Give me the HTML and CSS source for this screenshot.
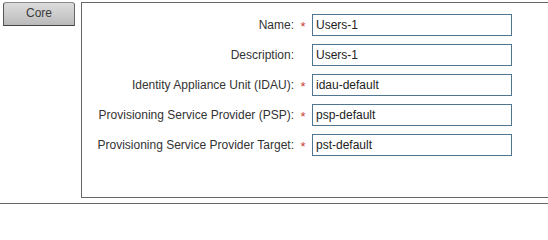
FILE: index.html
```html
<!DOCTYPE html>
<html>
<head>
<meta charset="utf-8">
<link rel="stylesheet" href="styles.css">
</head>
<body>
<div class="page">
  <div class="main">
    <div class="tabs">
      <div class="tab">Core</div>
    </div>
    <div class="panel">
      <div class="form">
        <label class="lbl">Name:</label><span class="req">*</span><input class="field" value="Users-1">
        <label class="lbl">Description:</label><span class="req"></span><input class="field" value="Users-1">
        <label class="lbl">Identity Appliance Unit (IDAU):</label><span class="req">*</span><input class="field" value="idau-default">
        <label class="lbl">Provisioning Service Provider (PSP):</label><span class="req">*</span><input class="field" value="psp-default">
        <label class="lbl">Provisioning Service Provider Target:</label><span class="req">*</span><input class="field" value="pst-default">
      </div>
    </div>
  </div>
  <div class="rule"></div>
</div>
</body>
</html>
```

FILE: styles.css
```css
html, body {
  margin: 0;
  padding: 0;
  background: #fff;
  overflow: hidden;
}
body {
  font-family: "Liberation Sans", Arial, sans-serif;
  font-size: 12px;
  color: #333;
}
.page {
  width: 548px;
  height: 211px;
}
.main {
  display: flex;
  align-items: flex-start;
  padding-top: 2px;
}
.tabs {
  width: 81px;
  flex: none;
  padding-left: 3px;
  box-sizing: border-box;
}
.tab {
  width: 72px;
  height: 24px;
  box-sizing: border-box;
  border: 1px solid #8a8a8a;
  border-left-color: #555;
  border-bottom-color: #444;
  border-right-color: #666;
  border-radius: 3px 3px 0 0;
  background: linear-gradient(#dcdcdc, #c9c9c9 60%, #b9b9b9);
  color: #3a3a3a;
  text-align: center;
  line-height: 20px;
  font-size: 12px;
}
.panel {
  flex: none;
  width: 490px;
  height: 196px;
  box-sizing: border-box;
  border: 1px solid #666;
  padding-top: 11px;
}
.form {
  display: grid;
  grid-template-columns: 212px 18px 200px;
  row-gap: 8px;
  align-items: center;
}
.lbl {
  text-align: right;
  color: #333;
  white-space: nowrap;
  padding-right: 0;
}
.req {
  color: #c8403a;
  font-size: 13px;
  text-align: center;
  line-height: 12px;
  padding-top: 3px;
}
.field {
  width: 200px;
  height: 22px;
  box-sizing: border-box;
  margin: 0;
  border: 1px solid #4f7590;
  padding: 0 3px;
  font-family: "Liberation Sans", Arial, sans-serif;
  font-size: 12px;
  color: #222;
  background: #fff;
  outline: none;
}
.rule {
  margin-top: 5px;
  height: 0;
  border-top: 1px solid #666;
}
```
